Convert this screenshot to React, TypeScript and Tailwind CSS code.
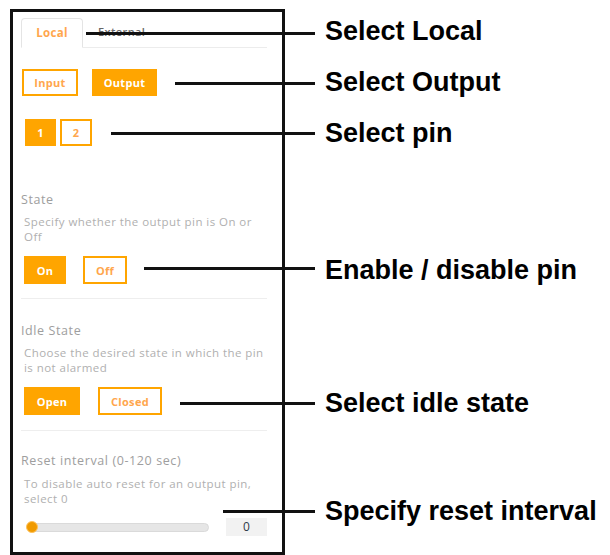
import { useState } from 'react';

const ORANGE = 'border-[#ffa500]';

type Callout = { label: string; lineY: number; lineX: number; textY: number };

const CALLOUTS: Callout[] = [
  { label: 'Select Local', lineY: 32, lineX: 86, textY: 18 },
  { label: 'Select Output', lineY: 82, lineX: 175, textY: 69 },
  { label: 'Select pin', lineY: 132, lineX: 111, textY: 120 },
  { label: 'Enable / disable pin', lineY: 267, lineX: 144, textY: 257 },
  { label: 'Select idle state', lineY: 402, lineX: 180, textY: 390 },
  { label: 'Specify reset interval', lineY: 510, lineX: 223, textY: 498 },
];

function Toggle({ active, label, className, onClick }: { active: boolean; label: string; className: string; onClick: () => void }) {
  return (
    <button
      onClick={onClick}
      className={`flex items-center justify-center border-2 ${ORANGE} text-[11px] font-bold leading-none tracking-[0.3px] ${
        active ? 'bg-[#ffa500] text-white' : 'bg-white text-[#ffa64d]'
      } ${className}`}
    >
      {label}
    </button>
  );
}

export default function App() {
  const [tab, setTab] = useState<'local' | 'external'>('local');
  const [dir, setDir] = useState<'input' | 'output'>('output');
  const [pin, setPin] = useState(1);
  const [on, setOn] = useState(true);
  const [idle, setIdle] = useState<'open' | 'closed'>('open');
  const [interval] = useState(0);

  const labelClass = 'ml-[8px] text-[12.5px] leading-[16px] tracking-[0.6px] text-[#9e9e9e]';
  const descClass = 'ml-[11px] text-[11.5px] leading-[15px] tracking-[0.45px] text-[#b0b0b0] whitespace-nowrap';

  return (
    <div className="relative w-[610px] h-[555px] bg-white overflow-hidden" style={{ fontFamily: '"Open Sans", sans-serif' }}>
      <div className="ml-[10px] pt-[9px]">
        <div className="w-[275px] h-[546px] border-[3px] border-[#111] bg-white">
          {/* Tabs */}
          <div className="ml-[8px] mr-[15px] mt-[6px] flex items-end h-[30px] border-b border-[#ececec]">
            <button
              onClick={() => setTab('local')}
              className={`w-[62px] h-[30px] -mb-px bg-white rounded-t-[4px] border border-[#e4e4e4] border-b-white text-[11.5px] font-bold tracking-[0.3px] ${
                tab === 'local' ? 'text-[#ffa64d]' : 'text-[#555]'
              }`}
            >
              Local
            </button>
            <button onClick={() => setTab('external')} className="h-[30px] pl-[15px] text-[11px] font-semibold tracking-[0.4px] text-[#666]">
              External
            </button>
          </div>

          {/* Input / Output */}
          <div className="mt-[21px] pl-[9px] flex">
            <Toggle active={dir === 'input'} label="Input" className="w-[56px] h-[27px]" onClick={() => setDir('input')} />
            <Toggle active={dir === 'output'} label="Output" className="ml-[14px] w-[65px] h-[27px]" onClick={() => setDir('output')} />
          </div>

          {/* Pins */}
          <div className="mt-[23px] pl-[12px] flex">
            <Toggle active={pin === 1} label="1" className="w-[31px] h-[27px]" onClick={() => setPin(1)} />
            <Toggle active={pin === 2} label="2" className="ml-[4px] w-[32px] h-[27px]" onClick={() => setPin(2)} />
          </div>

          {/* State */}
          <div className={`mt-[46px] ${labelClass}`}>State</div>
          <p className={`mt-[6px] ${descClass}`}>
            Specify whether the output pin is On or
            <br />
            Off
          </p>
          <div className="mt-[12px] pl-[11px] flex">
            <Toggle active={on} label="On" className="w-[42px] h-[28px]" onClick={() => setOn(true)} />
            <Toggle active={!on} label="Off" className="ml-[17px] w-[44px] h-[28px]" onClick={() => setOn(false)} />
          </div>

          <div className="mt-[14px] ml-[8px] mr-[15px] border-t border-[#eeeeee]" />

          {/* Idle state */}
          <div className={`mt-[24px] ${labelClass}`}>Idle State</div>
          <p className={`mt-[6px] ${descClass}`}>
            Choose the desired state in which the pin
            <br />
            is not alarmed
          </p>
          <div className="mt-[12px] pl-[11px] flex">
            <Toggle active={idle === 'open'} label="Open" className="w-[56px] h-[28px]" onClick={() => setIdle('open')} />
            <Toggle active={idle === 'closed'} label="Closed" className="ml-[18px] w-[64px] h-[28px]" onClick={() => setIdle('closed')} />
          </div>

          <div className="mt-[15px] ml-[8px] mr-[15px] border-t border-[#eeeeee]" />

          {/* Reset interval */}
          <div className={`mt-[22px] ${labelClass}`}>Reset interval (0-120 sec)</div>
          <p className={`mt-[7px] ${descClass}`}>
            To disable auto reset for an output pin,
            <br />
            select 0
          </p>
          <div className="mt-[12px] ml-[14px] mr-[15px] flex items-center h-[18px]">
            <div className="relative w-[182px] h-[9px] rounded-full bg-[#e6e6e6] border border-[#dadada]">
              <div className="absolute left-[-2px] top-1/2 -translate-y-1/2 w-[12px] h-[12px] rounded-full bg-[#f09a00] border border-[#ffc25a]" />
            </div>
            <div className="ml-auto w-[41px] h-[18px] bg-[#f2f2f2] flex items-center justify-center text-[12px] text-[#2f3a4a]">
              {interval}
            </div>
          </div>
        </div>
      </div>

      {/* Callouts */}
      {CALLOUTS.map((c) => (
        <div key={c.label}>
          <div
            className="absolute h-[3px] bg-[#111]"
            style={{ top: c.lineY, left: c.lineX, width: 315 - c.lineX }}
          />
          <div
            className="absolute left-[325px] text-[27px] leading-[27px] font-bold text-black whitespace-nowrap"
            style={{ top: c.textY, fontFamily: '"Liberation Sans", Arial, sans-serif' }}
          >
            {c.label}
          </div>
        </div>
      ))}
    </div>
  );
}
